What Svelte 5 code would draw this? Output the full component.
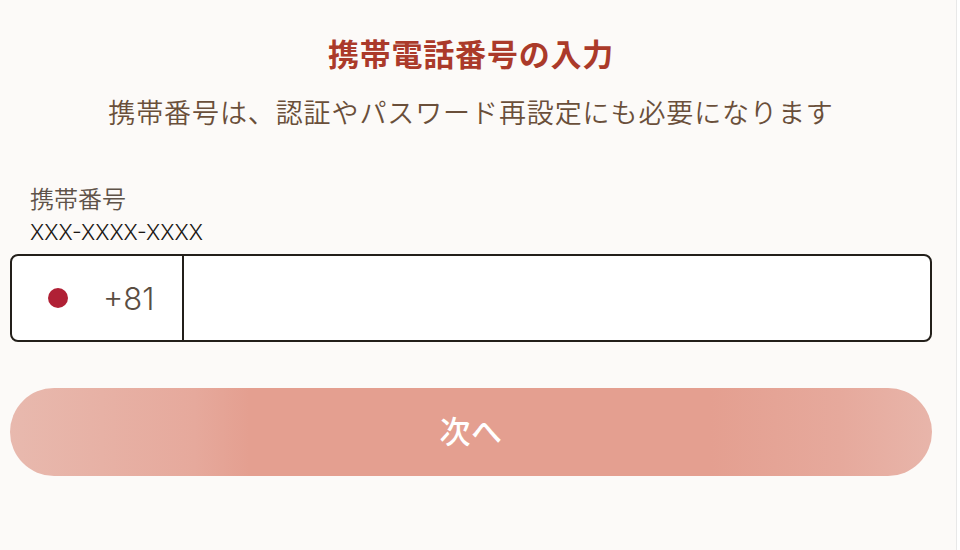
<script>
	let phone = $state('');
</script>

<div class="page">
	<h1>携帯電話番号の入力</h1>
	<p class="lead">携帯番号は、認証やパスワード再設定にも必要になります</p>

	<form class="form" onsubmit={(e) => e.preventDefault()}>
		<label class="label" for="phone">携帯番号</label>
		<div class="hint">XXX-XXXX-XXXX</div>
		<div class="field">
			<div class="country">
				<span class="flag"></span>
				<span class="code">+81</span>
			</div>
			<input id="phone" type="tel" bind:value={phone} />
		</div>
		<button class="next" type="submit">次へ</button>
	</form>
</div>

<style>
	:global(body) {
		margin: 0;
		background: #fff;
	}
	.page {
		box-sizing: border-box;
		width: 957px;
		height: 550px;
		padding: 32px 24px 0 10px;
		background: #fcfaf8;
		border-right: 1px solid #e8e8e8;
		font-family: "Noto Sans CJK JP", "Noto Sans", sans-serif;
	}
	h1 {
		margin: 0;
		font-size: 31px;
		line-height: 42px;
		font-weight: 700;
		letter-spacing: 0.8px;
		text-align: center;
		color: #ab3a2a;
	}
	.lead {
		margin: 19px 0 0;
		font-size: 27px;
		line-height: 38px;
		font-weight: 350;
		letter-spacing: 0.9px;
		text-align: center;
		color: #6a4f3a;
	}
	.form {
		margin-top: 50px;
	}
	.label {
		display: block;
		margin-left: 20px;
		font-size: 24px;
		line-height: 34px;
		font-weight: 350;
		color: #5f5349;
	}
	.hint {
		margin-top: 2px;
		margin-left: 20px;
		font-family: "Inter", sans-serif;
		font-size: 21.5px;
		line-height: 30px;
		font-weight: 300;
		color: #1a1714;
	}
	.field {
		box-sizing: border-box;
		display: flex;
		height: 88px;
		margin-top: 7px;
		background: #fff;
		border: 2px solid #231f1a;
		border-radius: 8px;
	}
	.country {
		display: flex;
		align-items: center;
		width: 170px;
		flex: none;
		border-right: 2px solid #231f1a;
	}
	.flag {
		width: 20px;
		height: 20px;
		margin-left: 36px;
		border-radius: 50%;
		background: #b02035;
	}
	.code {
		margin-left: 35px;
		font-family: "Inter", sans-serif;
		font-size: 31px;
		font-weight: 300;
		color: #5a4d42;
	}
	input {
		flex: 1;
		min-width: 0;
		border: 0;
		outline: 0;
		background: transparent;
		border-radius: 0 6px 6px 0;
	}
	.next {
		display: block;
		width: 100%;
		height: 88px;
		margin-top: 46px;
		padding: 0 0 5px;
		border: 0;
		border-radius: 44px;
		background: linear-gradient(90deg, #e8b9ae 0%, #e6a99c 20%, #e49f90 26%, #e49f90 76%, #e6a99c 90%, #e8b5aa 100%);
		color: #fff;
		font-family: "Noto Sans CJK JP", sans-serif;
		font-size: 31px;
		font-weight: 500;
		letter-spacing: 0.5px;
	}
</style>
